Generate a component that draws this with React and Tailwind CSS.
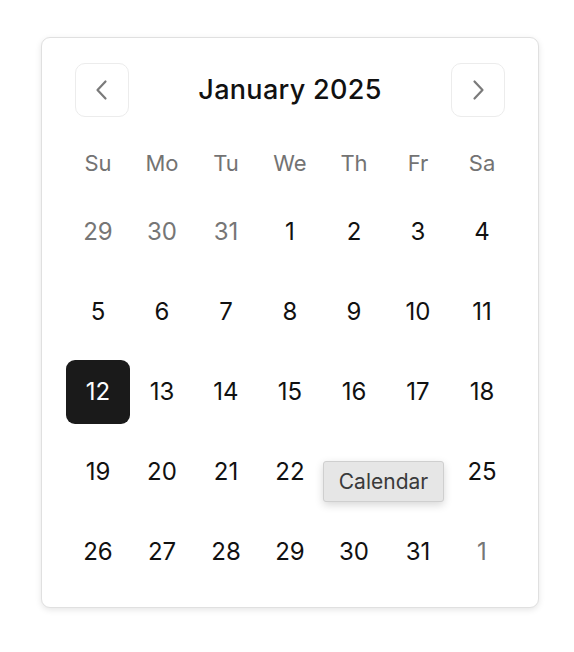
import React from 'react';

const WEEKDAYS = ['Su', 'Mo', 'Tu', 'We', 'Th', 'Fr', 'Sa'];

const buildDays = () => {
  const days = [29, 30, 31].map(d => ({ d, outside: true }));
  for (let d = 1; d <= 31; d++) days.push({ d, outside: false });
  days.push({ d: 1, outside: true });
  return days;
};

const Chevron = ({ dir }) => (
  <svg width="24" height="24" viewBox="0 0 24 24" fill="none" stroke="#7a7a7a" strokeWidth="2.2" strokeLinecap="round" strokeLinejoin="round">
    {dir === 'left' ? <path d="M15.5 3.5L7.5 12l8 8.5" /> : <path d="M8.5 3.5l8 8.5-8 8.5" />}
  </svg>
);

export default function App() {
  const days = buildDays();

  return (
    <div className="min-h-[652px] bg-white pt-[37px] pl-[41px]" style={{ fontFamily: 'Inter, "Liberation Sans", sans-serif' }}>
      <div className="relative w-[498px] h-[571px] rounded-[9px] border border-[#e0e0e0] bg-white shadow-[0_2px_6px_rgba(0,0,0,0.1)] px-[24px] pt-[25px]">
        {/* cabecera */}
        <div className="flex items-center justify-between px-[9px]">
          <button className="w-[54px] h-[54px] rounded-[10px] border border-[#ececec] flex items-center justify-center">
            <Chevron dir="left" />
          </button>
          <h2 className="text-[27px] font-medium text-[#111] tracking-[0.3px]">January 2025</h2>
          <button className="w-[54px] h-[54px] rounded-[10px] border border-[#ececec] flex items-center justify-center">
            <Chevron dir="right" />
          </button>
        </div>

        {/* días de la semana */}
        <div className="grid grid-cols-7 mt-[30px] h-[32px] items-center">
          {WEEKDAYS.map(w => (
            <div key={w} className="text-center text-[22px] text-[#737373]">{w}</div>
          ))}
        </div>

        {/* días */}
        <div className="grid grid-cols-7 gap-y-[16px] mt-[21px]">
          {days.map((item, i) => {
            const selected = !item.outside && item.d === 12;
            return (
              <div
                key={i}
                className={`h-[64px] flex items-center justify-center text-[24px] rounded-[9px] ${
                  selected ? 'bg-[#1a1a1a] text-white' : item.outside ? 'text-[#767676]' : 'text-[#111]'
                }`}
              >
                {item.d}
              </div>
            );
          })}
        </div>

        {/* tooltip */}
        <div className="absolute left-[281px] top-[423px] w-[121px] h-[41px] rounded-[3px] border border-[#cfcfcf] bg-[#e6e6e6] shadow-[0_3px_8px_rgba(0,0,0,0.16)] flex items-center justify-center text-[21px] text-[#3a3a3a]">
          Calendar
        </div>
      </div>
    </div>
  );
}
